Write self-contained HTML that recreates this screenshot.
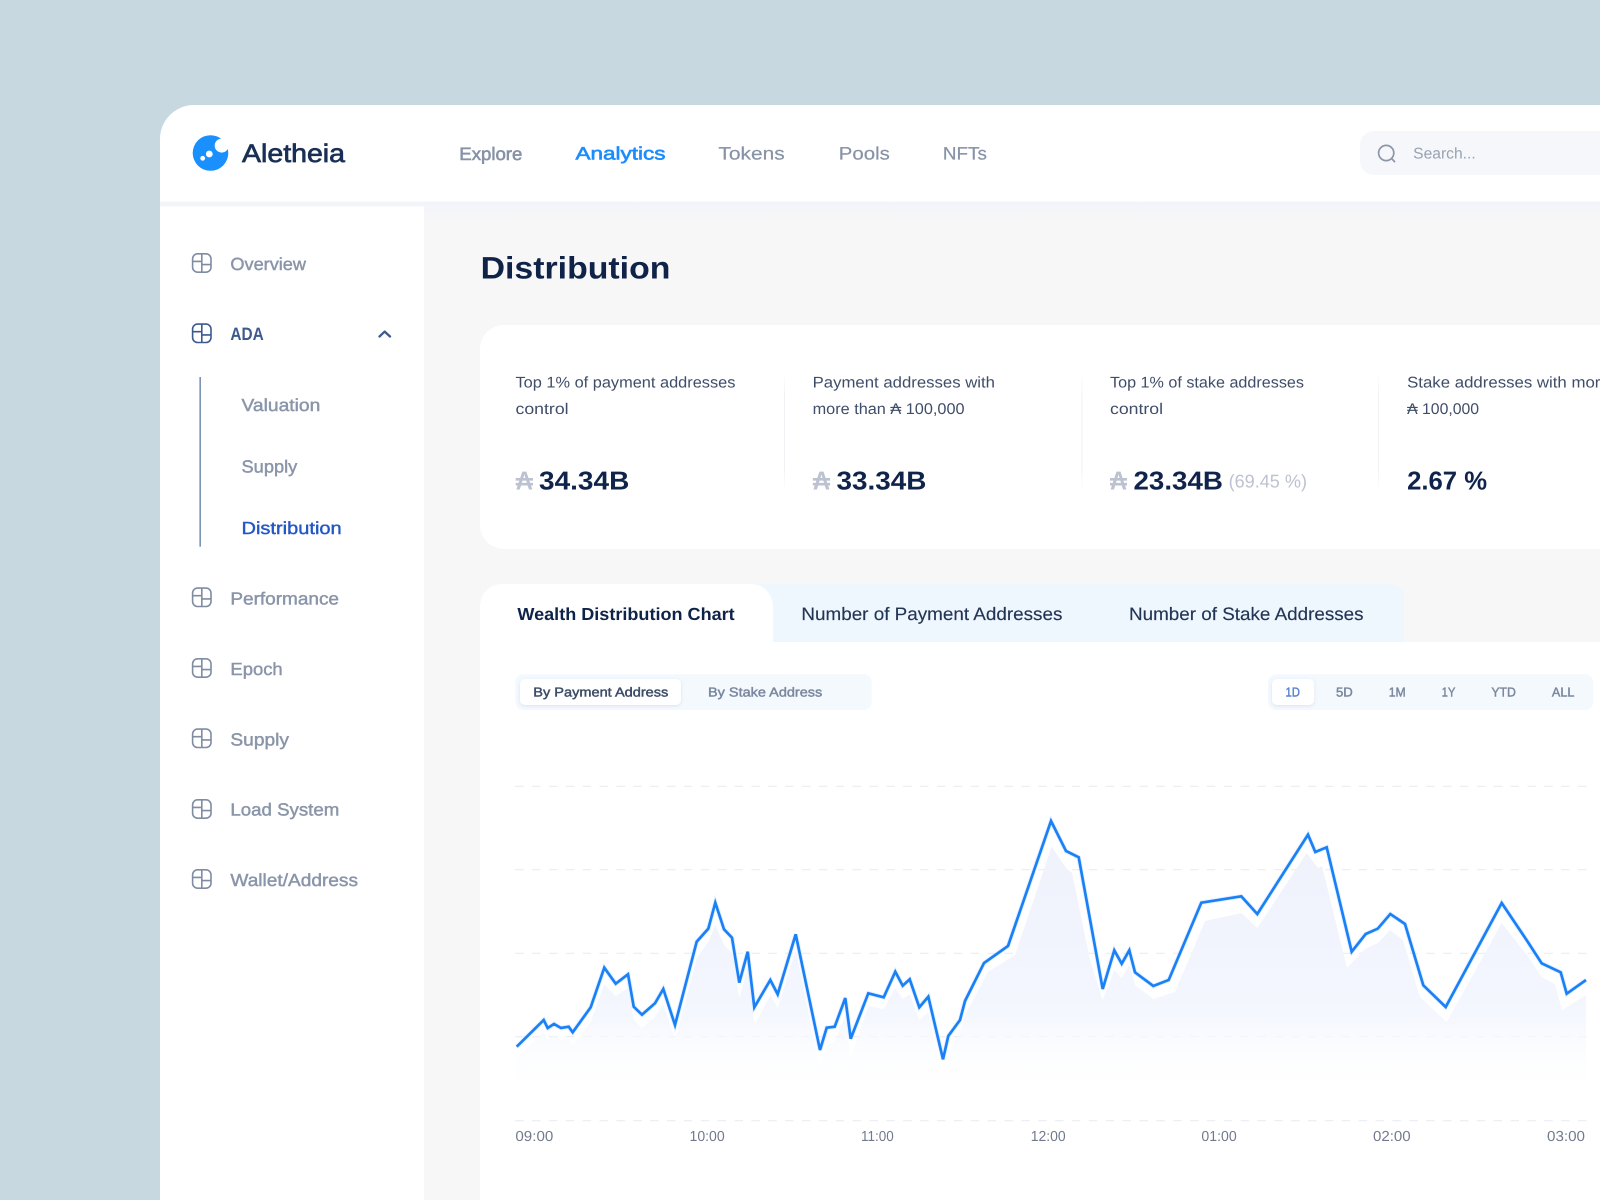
<!DOCTYPE html>
<html lang="en"><head><meta charset="utf-8"><title>Aletheia Distribution</title>
<style>
html,body{margin:0;padding:0;width:1600px;height:1200px;overflow:hidden;background:#c8d8e0}
svg{display:block;position:absolute;left:0;top:0}
text{font-family:"Liberation Sans","DejaVu Sans",sans-serif;text-rendering:geometricPrecision}
.m{stroke-width:.45px}
.b{font-weight:700}
.nav{font-size:18px}
.side{font-size:17.5px;fill:#8a95a9;stroke:#8a95a9}
.stat{font-size:15.5px;fill:#3f4d69}
.val{font-size:26px;font-weight:700;fill:#10244b}
.ada{font-size:26px;font-weight:700;fill:#bcc2cf}
.tab{font-size:18px;fill:#233554;stroke:#233554}
.seg{font-size:13px;fill:#7a879e;stroke:#7a879e}
.tick{font-size:14.5px;fill:#707a8d}
</style></head><body>
<svg width="1600" height="1200" viewBox="0 0 1600 1200" xmlns="http://www.w3.org/2000/svg">
<defs>
<linearGradient id="strip" x1="0" y1="0" x2="0" y2="1"><stop offset="0" stop-color="#f1f4f9"/><stop offset="1" stop-color="#f7f7f8"/></linearGradient>
<linearGradient id="area" gradientUnits="userSpaceOnUse" x1="0" y1="840" x2="0" y2="1098"><stop offset="0" stop-color="#eff1fc"/><stop offset=".68" stop-color="#f4f7fe"/><stop offset="1" stop-color="#ffffff" stop-opacity="0"/></linearGradient>
<linearGradient id="div" x1="0" y1="0" x2="0" y2="1"><stop offset="0" stop-color="#f1f2f5" stop-opacity="0"/><stop offset=".2" stop-color="#f0f1f4"/><stop offset=".8" stop-color="#f0f1f4"/><stop offset="1" stop-color="#f1f2f5" stop-opacity="0"/></linearGradient>
<clipPath id="ac"><rect x="516" y="780" width="1070" height="340"/></clipPath>
<filter id="sh" x="-20%" y="-30%" width="140%" height="170%"><feDropShadow dx="0" dy="1" stdDeviation="1.5" flood-color="#8ba3c4" flood-opacity=".28"/></filter>
<g id="ic" fill="none" stroke-width="1.6"><rect x="-9.2" y="-9.2" width="18.4" height="18.4" rx="5"/><path d="M0-9.2V9.2M-9.2-1.6H0M0 1.6H9.2"/></g>
</defs>
<rect width="1600" height="1200" fill="#c8d8e0"/>
<path d="M160 1200V139a34 34 0 0 1 34-34H1600V1200Z" fill="#fff"/>
<rect x="160" y="201.5" width="1440" height="5" fill="#f1f4f9"/>
<rect x="424" y="201.5" width="1176" height="998.5" fill="#f7f7f8"/>
<rect x="424" y="201.5" width="1176" height="20" fill="url(#strip)"/>

<!-- logo -->
<circle cx="210.5" cy="153" r="17.8" fill="#1a90ff"/>
<circle cx="221.7" cy="145.6" r="7" fill="#fff"/>
<circle cx="228" cy="139" r="6" fill="#fff"/>
<circle cx="209.3" cy="154" r="3.4" fill="#fff"/>
<circle cx="202.7" cy="158.3" r="2.4" fill="#fff"/>
<text x="242" y="162" font-size="25.5" textLength="103" lengthAdjust="spacingAndGlyphs" fill="#1a2f55" stroke="#1a2f55" stroke-width=".7">Aletheia</text>

<!-- nav -->
<g class="nav">
<text x="459.3" y="160" textLength="63" lengthAdjust="spacingAndGlyphs" fill="#8792a6" stroke="#8792a6" stroke-width=".6">Explore</text>
<text x="575.5" y="159.6" textLength="90" lengthAdjust="spacingAndGlyphs" fill="#1a8cff" stroke="#1a8cff" stroke-width=".6">Analytics</text>
<text x="718.4" y="159.6" textLength="66.3" lengthAdjust="spacingAndGlyphs" fill="#8792a6" stroke="#8792a6" stroke-width=".2">Tokens</text>
<text x="838.8" y="159.6" textLength="51" lengthAdjust="spacingAndGlyphs" fill="#8792a6" stroke="#8792a6" stroke-width=".2">Pools</text>
<text x="942.9" y="159.6" textLength="44" lengthAdjust="spacingAndGlyphs" fill="#8792a6" stroke="#8792a6" stroke-width=".2">NFTs</text>
</g>

<!-- search -->
<path d="M1600 131H1374a14 14 0 0 0-14 14v16a14 14 0 0 0 14 14H1600Z" fill="#f5f7fa"/>
<circle cx="1386.2" cy="153" r="7.6" fill="none" stroke="#8b97a8" stroke-width="1.7"/>
<path d="M1391.6 158.6L1394.6 161.6" stroke="#8b97a8" stroke-width="1.7" stroke-linecap="round"/>
<text x="1413.2" y="158.5" font-size="15.5" textLength="62.5" lengthAdjust="spacingAndGlyphs" fill="#98a2b3">Search...</text>

<!-- sidebar -->
<use href="#ic" x="201.8" y="263" stroke="#7f8ca2"/>
<text class="side m" x="230.4" y="270" textLength="75.6" lengthAdjust="spacingAndGlyphs">Overview</text>
<use href="#ic" x="201.8" y="333.3" stroke="#3d5a8f"/>
<text x="230.4" y="340" font-size="18" font-weight="700" textLength="33.3" lengthAdjust="spacingAndGlyphs" fill="#3d5a8f">ADA</text>
<path d="M379.5 336.5L384.7 331.6L390 336.5" fill="none" stroke="#3d5a8f" stroke-width="2.3" stroke-linecap="round" stroke-linejoin="round"/>
<rect x="199.5" y="377" width="1.3" height="169.7" fill="#5d7ba8"/>
<text class="side m" x="241.5" y="411" textLength="78.8" lengthAdjust="spacingAndGlyphs">Valuation</text>
<text class="side m" x="241.5" y="472.7" textLength="55.8" lengthAdjust="spacingAndGlyphs">Supply</text>
<text class="m" x="241.5" y="534" font-size="17.5" textLength="100.2" lengthAdjust="spacingAndGlyphs" fill="#2257c5" stroke="#2257c5" style="stroke-width:.4px">Distribution</text>
<use href="#ic" x="201.8" y="597.3" stroke="#7f8ca2"/>
<text class="side m" x="230.4" y="604.3" textLength="108.6" lengthAdjust="spacingAndGlyphs">Performance</text>
<use href="#ic" x="201.8" y="668" stroke="#7f8ca2"/>
<text class="side m" x="230.4" y="675" textLength="52.3" lengthAdjust="spacingAndGlyphs">Epoch</text>
<use href="#ic" x="201.8" y="738.3" stroke="#7f8ca2"/>
<text class="side m" x="230.4" y="745.3" textLength="58.6" lengthAdjust="spacingAndGlyphs">Supply</text>
<use href="#ic" x="201.8" y="809" stroke="#7f8ca2"/>
<text class="side m" x="230.4" y="815.7" textLength="108.9" lengthAdjust="spacingAndGlyphs">Load System</text>
<use href="#ic" x="201.8" y="879" stroke="#7f8ca2"/>
<text class="side m" x="230.4" y="886" textLength="127.6" lengthAdjust="spacingAndGlyphs">Wallet/Address</text>

<!-- title -->
<text x="480.6" y="278.3" font-size="31" font-weight="700" textLength="189.8" lengthAdjust="spacingAndGlyphs" fill="#0f2248">Distribution</text>

<!-- stats -->
<path d="M1600 325H504a24 24 0 0 0-24 24v176a24 24 0 0 0 24 24H1600Z" fill="#fff"/>
<rect x="784" y="372" width="1" height="121" fill="url(#div)"/>
<rect x="1081.4" y="372" width="1" height="121" fill="url(#div)"/>
<rect x="1378" y="372" width="1" height="121" fill="url(#div)"/>
<text class="stat" x="515.5" y="387.6" textLength="219.9" lengthAdjust="spacingAndGlyphs">Top 1% of payment addresses</text>
<text class="stat" x="515.5" y="414" textLength="53.1" lengthAdjust="spacingAndGlyphs">control</text>
<text class="stat" x="812.6" y="387.6" textLength="182.4" lengthAdjust="spacingAndGlyphs">Payment addresses with</text>
<text class="stat" x="812.6" y="414" textLength="152" lengthAdjust="spacingAndGlyphs">more than ₳ 100,000</text>
<text class="stat" x="1110" y="387.6" textLength="194" lengthAdjust="spacingAndGlyphs">Top 1% of stake addresses</text>
<text class="stat" x="1110" y="414" textLength="53" lengthAdjust="spacingAndGlyphs">control</text>
<text class="stat" x="1407.1" y="387.6" textLength="240" lengthAdjust="spacingAndGlyphs">Stake addresses with more than</text>
<text class="stat" x="1407.1" y="414" textLength="72" lengthAdjust="spacingAndGlyphs">₳ 100,000</text>
<text class="ada" x="515.7" y="489.3" textLength="17.2" lengthAdjust="spacingAndGlyphs">₳</text>
<text class="val" x="539" y="489.3" textLength="90.3" lengthAdjust="spacingAndGlyphs">34.34B</text>
<text class="ada" x="812.9" y="489.3" textLength="17.2" lengthAdjust="spacingAndGlyphs">₳</text>
<text class="val" x="836.5" y="489.3" textLength="89.9" lengthAdjust="spacingAndGlyphs">33.34B</text>
<text class="ada" x="1110" y="489.3" textLength="17" lengthAdjust="spacingAndGlyphs">₳</text>
<text class="val" x="1133.5" y="489.3" textLength="89.4" lengthAdjust="spacingAndGlyphs">23.34B</text>
<text x="1228.6" y="487.7" font-size="18.5" textLength="78.4" lengthAdjust="spacingAndGlyphs" fill="#bcc2cf">(69.45 %)</text>
<text class="val" x="1407.1" y="489.3" textLength="80" lengthAdjust="spacingAndGlyphs">2.67 %</text>

<!-- tabs -->
<rect x="480" y="642" width="1120" height="558" fill="#fff"/>
<path d="M740 584H1390a14 14 0 0 1 14 14V642H740Z" fill="#eef6fe"/>
<path d="M480 642V606a22 22 0 0 1 22-22H751a22 22 0 0 1 22 22V642Z" fill="#fff"/>
<text x="517.4" y="620" font-size="17.5" font-weight="700" textLength="217.3" lengthAdjust="spacingAndGlyphs" fill="#0f2248">Wealth Distribution Chart</text>
<text class="tab" x="801.4" y="620" textLength="261" lengthAdjust="spacingAndGlyphs" stroke-width=".15">Number of Payment Addresses</text>
<text class="tab" x="1129" y="620" textLength="234.6" lengthAdjust="spacingAndGlyphs" stroke-width=".15">Number of Stake Addresses</text>

<!-- segments -->
<rect x="515.3" y="674.3" width="356.4" height="35.7" rx="8" fill="#f4f9fe"/>
<rect x="520" y="679" width="161" height="26" rx="5" fill="#fff" filter="url(#sh)"/>
<text class="seg m" x="533.3" y="696.7" textLength="135" lengthAdjust="spacingAndGlyphs" style="fill:#3d4d68;stroke:#3d4d68">By Payment Address</text>
<text class="seg m" x="708" y="696.7" textLength="114.3" lengthAdjust="spacingAndGlyphs">By Stake Address</text>
<rect x="1268" y="674.3" width="325.2" height="35.7" rx="8" fill="#f4f9fe"/>
<rect x="1272" y="679" width="42.2" height="26" rx="5" fill="#fff" filter="url(#sh)"/>
<text class="seg m" x="1285.5" y="696.7" textLength="14.5" lengthAdjust="spacingAndGlyphs" style="fill:#5b84d0;stroke:#5b84d0">1D</text>
<text class="seg m" x="1336" y="696.7" textLength="16.8" lengthAdjust="spacingAndGlyphs">5D</text>
<text class="seg m" x="1388.8" y="696.7" textLength="16.9" lengthAdjust="spacingAndGlyphs">1M</text>
<text class="seg m" x="1441.6" y="696.7" textLength="13.8" lengthAdjust="spacingAndGlyphs">1Y</text>
<text class="seg m" x="1491.4" y="696.7" textLength="24.5" lengthAdjust="spacingAndGlyphs">YTD</text>
<text class="seg m" x="1551.9" y="696.7" textLength="22.5" lengthAdjust="spacingAndGlyphs">ALL</text>

<!-- grid -->
<g stroke="#e8eaee" stroke-width="1" stroke-dasharray="8.5 8.37" fill="none">
<path d="M1586.5 786.3H515"/><path d="M1586.5 869.7H515"/><path d="M1586.5 953.3H515"/><path d="M1586.5 1036.7H515"/><path d="M1586.5 1120.7H515"/>
</g>

<!-- area -->
<path clip-path="url(#ac)" fill="url(#area)" d="M516.7 1058L543.7 1032L547.7 1040L554 1036L561 1040L568.7 1039L572.7 1045L590.7 1022L604.3 984L615.7 996L628 988L633.7 1020L642 1028L655 1017L663.3 1004L675 1040L696.7 958L708.3 942L715.3 925L724 945L732 953L739.3 998L747.7 968L754.3 1026L770.3 995L777.7 1008L795.7 950L820 1068L826.7 1045L834.7 1042L845.3 1016L850.7 1058L868.3 1006L883.7 1009L895.3 988L902.7 999L909.7 994L919.3 1020L928.3 1012L943 1075L948.3 1052L960 1032L965 1015L988 972L1015 955L1051.7 846.7L1066 868L1072 873L1090 960L1102.7 1000L1114.3 970L1121.7 978L1129.3 964L1135 985L1153.3 999L1175 992L1205 921L1241.3 913L1257.3 928L1306.7 853L1318 868L1322 866L1347 968L1365 949L1378 943L1390 930L1403 940L1420 997L1446.7 1022L1501.7 923L1527.7 956L1541.7 977L1555 984L1562 1010L1586 995V1120H516.7Z"/>
<!-- line -->
<path fill="none" stroke="#cfe3ff" stroke-opacity=".55" stroke-width="4.6" stroke-linejoin="miter" d="M516.7 1046.7L543.7 1020L547.7 1028L554 1024L561 1028L568.7 1026.7L572.7 1032.3L590.7 1007.3L604.3 967.7L615.7 983.7L628 974.3L633.7 1006.7L642 1014.7L655 1003.3L663.3 989L675 1025L696.7 941.7L708.3 928.7L715.3 902.7L724 929.3L732 937.7L739.3 982.7L747.7 951.7L754.3 1007.3L770.3 980L777.7 994.3L795.7 934.3L820 1050L826.7 1027.7L834.7 1026.7L845.3 998L850.7 1038.7L868.3 993.3L883.7 997.3L895.3 971.7L902.7 985.7L909.7 979.3L919.3 1007.3L928.3 996.7L943 1059.3L948.3 1036L960 1020L965 1001L984 963L1008 946L1051 821L1066 851L1078.7 857.3L1102.7 989L1114.3 950.3L1121.7 963.7L1129.3 950.3L1135 972.3L1153.3 986L1168.7 980L1201.3 902.7L1241.3 896.3L1257.3 914L1308 834.7L1315.3 852L1326.7 847.3L1351.7 951.7L1365.7 934L1377.7 928.7L1390.3 914L1405 924L1423.3 985.3L1445.7 1007L1501.7 903L1527.7 941.7L1541.7 963.3L1560.7 972.3L1566.7 993.7L1586 980"/>
<path fill="none" stroke="#1a80f5" stroke-width="2.7" stroke-linejoin="miter" d="M516.7 1046.7L543.7 1020L547.7 1028L554 1024L561 1028L568.7 1026.7L572.7 1032.3L590.7 1007.3L604.3 967.7L615.7 983.7L628 974.3L633.7 1006.7L642 1014.7L655 1003.3L663.3 989L675 1025L696.7 941.7L708.3 928.7L715.3 902.7L724 929.3L732 937.7L739.3 982.7L747.7 951.7L754.3 1007.3L770.3 980L777.7 994.3L795.7 934.3L820 1050L826.7 1027.7L834.7 1026.7L845.3 998L850.7 1038.7L868.3 993.3L883.7 997.3L895.3 971.7L902.7 985.7L909.7 979.3L919.3 1007.3L928.3 996.7L943 1059.3L948.3 1036L960 1020L965 1001L984 963L1008 946L1051 821L1066 851L1078.7 857.3L1102.7 989L1114.3 950.3L1121.7 963.7L1129.3 950.3L1135 972.3L1153.3 986L1168.7 980L1201.3 902.7L1241.3 896.3L1257.3 914L1308 834.7L1315.3 852L1326.7 847.3L1351.7 951.7L1365.7 934L1377.7 928.7L1390.3 914L1405 924L1423.3 985.3L1445.7 1007L1501.7 903L1527.7 941.7L1541.7 963.3L1560.7 972.3L1566.7 993.7L1586 980"/>

<!-- ticks -->
<text class="tick" x="515.4" y="1141" textLength="37.9" lengthAdjust="spacingAndGlyphs">09:00</text>
<text class="tick" x="689.5" y="1141" textLength="35.2" lengthAdjust="spacingAndGlyphs">10:00</text>
<text class="tick" x="861" y="1141" textLength="32.7" lengthAdjust="spacingAndGlyphs">11:00</text>
<text class="tick" x="1030.7" y="1141" textLength="35" lengthAdjust="spacingAndGlyphs">12:00</text>
<text class="tick" x="1201.4" y="1141" textLength="35.3" lengthAdjust="spacingAndGlyphs">01:00</text>
<text class="tick" x="1373" y="1141" textLength="37.7" lengthAdjust="spacingAndGlyphs">02:00</text>
<text class="tick" x="1547" y="1141" textLength="38" lengthAdjust="spacingAndGlyphs">03:00</text>
</svg>
</body></html>
